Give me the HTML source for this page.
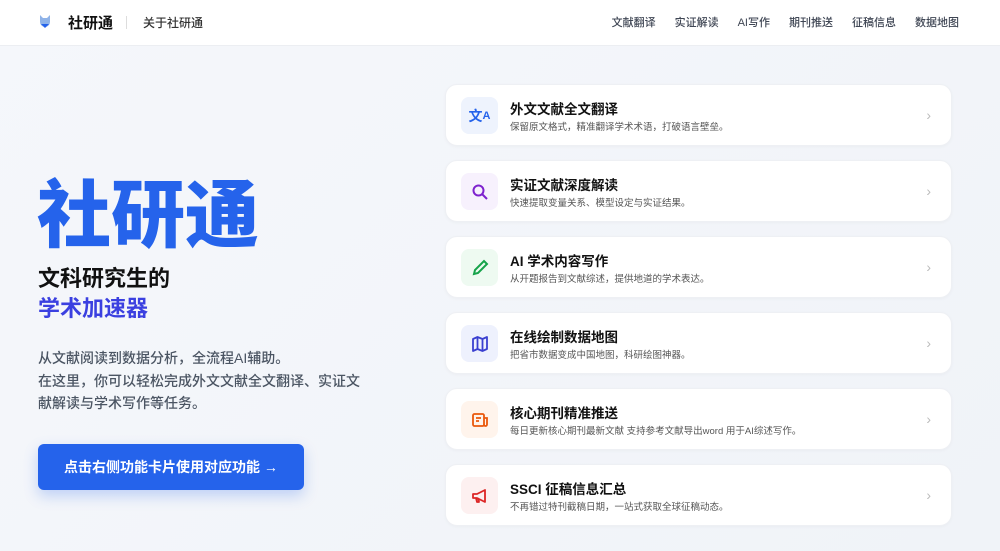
<!DOCTYPE html>
<html><head><meta charset="utf-8"><style>
*{margin:0;padding:0;box-sizing:border-box}
body{width:1000px;height:551px;overflow:hidden;font-family:"Liberation Sans","Noto Sans CJK SC",sans-serif;background:linear-gradient(135deg,#f5f7fb,#f0f3f8);position:relative}
.nav{position:absolute;left:0;top:0;width:1000px;height:46px;background:#fff;border-bottom:1px solid #eceef2}
.logo{position:absolute;left:38px;top:13px}
.brand{position:absolute;left:68px;top:12px;font-size:15px;font-weight:700;color:#111}
.sep{position:absolute;left:126px;top:16px;width:1px;height:13px;background:#ddd}
.about{position:absolute;left:143px;top:14px;font-size:12px;color:#333;font-weight:500}
.links{position:absolute;right:41px;top:14px;font-size:11px;color:#3f4654;display:flex;gap:19px;font-weight:500}
.t1{position:absolute;left:37px;top:168px;font-size:74px;font-weight:900;color:#2563eb;line-height:96px}
.t2{position:absolute;left:38px;top:264px;font-size:22px;font-weight:700;color:#111;line-height:30px}
.t2 span{color:#3b40e0}
.p{position:absolute;left:38px;top:347px;font-size:14px;color:#4b5563;line-height:22.5px;width:335px;font-weight:500}
.btn{position:absolute;left:38px;top:444px;width:266px;height:46px;background:#2563eb;border-radius:6px;color:#fff;font-size:14px;font-weight:700;text-align:center;line-height:46px;box-shadow:0 6px 14px rgba(37,99,235,.25)}
.card{position:absolute;left:445px;width:507px;height:62px;background:#fff;border-radius:12px;border:1px solid #eef0f4;box-shadow:0 1px 3px rgba(0,0,0,.03)}
.ic{position:absolute;left:15px;top:12px;width:37px;height:37px;border-radius:8px;display:flex;align-items:center;justify-content:center}
.ct{position:absolute;left:64px;top:13px;font-size:13.5px;font-weight:700;color:#111}
.cd{position:absolute;left:64px;top:34px;font-size:9.5px;color:#555}
.ch{position:absolute;right:20px;top:22px;color:#bbb;font-size:14px}
</style></head><body>
<div class="nav">
<svg class="logo" width="14" height="16" viewBox="0 0 14 16"><path d="M2 2l3 3h4l3-3v7a5 5 0 01-10 0z" fill="#8fb3e8"/><path d="M3 11l4 4 4-4z" fill="#2563eb"/></svg>
<div class="brand">社研通</div><div class="sep"></div><div class="about">关于社研通</div>
<div class="links"><span>文献翻译</span><span>实证解读</span><span>AI写作</span><span>期刊推送</span><span>征稿信息</span><span>数据地图</span></div>
</div>
<div class="t1">社研通</div>
<div class="t2">文科研究生的<br><span>学术加速器</span></div>
<div class="p">从文献阅读到数据分析，全流程AI辅助。<br>在这里，你可以轻松完成外文文献全文翻译、实证文献解读与学术写作等任务。</div>
<div class="btn">点击右侧功能卡片使用对应功能 →</div>

<div class="card" style="top:84px"><div class="ic" style="background:#eef3fd;color:#2563eb;font-size:14px;font-weight:700">文<span style="font-size:11px">A</span></div><div class="ct">外文文献全文翻译</div><div class="cd">保留原文格式，精准翻译学术术语，打破语言壁垒。</div><div class="ch">›</div></div>
<div class="card" style="top:160px"><div class="ic" style="background:#f7f1fd"><svg width="18" height="18" viewBox="0 0 18 18" fill="none" stroke="#7e22ce" stroke-width="2"><circle cx="7.5" cy="7.5" r="5"/><path d="M11.5 11.5l4.5 4.5"/></svg></div><div class="ct">实证文献深度解读</div><div class="cd">快速提取变量关系、模型设定与实证结果。</div><div class="ch">›</div></div>
<div class="card" style="top:236px"><div class="ic" style="background:#eefaf1"><svg width="18" height="18" viewBox="0 0 18 18" fill="none" stroke="#16a34a" stroke-width="2"><path d="M3 15l1-4 9-9 3 3-9 9z"/></svg></div><div class="ct">AI 学术内容写作</div><div class="cd">从开题报告到文献综述，提供地道的学术表达。</div><div class="ch">›</div></div>
<div class="card" style="top:312px"><div class="ic" style="background:#eef1fd"><svg width="18" height="18" viewBox="0 0 18 18" fill="none" stroke="#3b40d0" stroke-width="1.8" stroke-linejoin="round"><path d="M2 4l4.5-2 5 2L16 2v12l-4.5 2-5-2L2 16z M6.5 2v12 M11.5 4v12"/></svg></div><div class="ct">在线绘制数据地图</div><div class="cd">把省市数据变成中国地图，科研绘图神器。</div><div class="ch">›</div></div>
<div class="card" style="top:388px"><div class="ic" style="background:#fff4ec"><svg width="18" height="18" viewBox="0 0 18 18" fill="none" stroke="#ea580c" stroke-width="1.8"><rect x="2" y="3" width="11" height="12" rx="1.5"/><path d="M13 7h3v6.5a1.5 1.5 0 01-3 0 M5 7h5 M5 10h3"/></svg></div><div class="ct">核心期刊精准推送</div><div class="cd">每日更新核心期刊最新文献 支持参考文献导出word 用于AI综述写作。</div><div class="ch">›</div></div>
<div class="card" style="top:464px"><div class="ic" style="background:#fdf0f0"><svg width="18" height="18" viewBox="0 0 18 18" fill="none" stroke="#dc2626" stroke-width="1.8" stroke-linejoin="round"><path d="M2 7h4l8-4v12l-8-4H2z M5 11l1 4h2l-1-4"/></svg></div><div class="ct">SSCI 征稿信息汇总</div><div class="cd">不再错过特刊截稿日期，一站式获取全球征稿动态。</div><div class="ch">›</div></div>
</body></html>
